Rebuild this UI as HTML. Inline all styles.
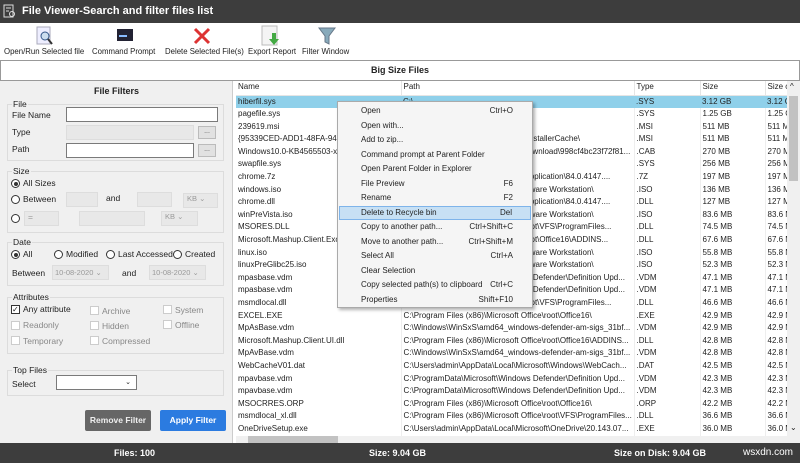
<!DOCTYPE html>
<html><head><meta charset="utf-8"><style>
*{box-sizing:border-box;margin:0;padding:0}
body{width:800px;height:463px;overflow:hidden;font-family:"Liberation Sans",sans-serif;font-size:8.5px;color:#222;background:#fff;position:relative}
.abs{position:absolute}
#title{left:0;top:0;width:800px;height:23px;background:#3d3d3d;color:#fff;font-weight:bold;font-size:11px;line-height:23px;padding-left:22px}
#tb{left:0;top:23px;width:800px;height:37px;background:#fff}
.tbi{position:absolute;top:24px;font-size:7.8px;color:#222;white-space:nowrap}
#hdr{left:0;top:60px;width:800px;height:21px;border:1px solid #999;background:#fff;text-align:center;font-weight:bold;font-size:9px;line-height:19px}
#left{left:0;top:81px;width:233px;height:362px;background:#f0f0f0;border-right:1px solid #ccc}
.grp{position:absolute;border:1px solid #dcdcdc;left:7px;width:217px}
.gl{position:absolute;top:-6px;left:4px;background:#f0f0f0;padding:0 1px;font-size:8.5px}
.t{position:absolute;font-size:8.5px;white-space:nowrap}
.inp{position:absolute;border:1px solid #7a7a7a;background:#fff;height:15px}
.dis{position:absolute;border:1px solid #ddd;background:#e8e8e8;height:15px}
.btn{position:absolute;border:1px solid #bbb;background:#e1e1e1;width:18px;height:13px;font-size:7px;text-align:center;line-height:10px;color:#555}
.rad{position:absolute;width:9px;height:9px;border:1px solid #333;border-radius:50%;background:#fff}
.rad.on::after{content:"";position:absolute;left:1.5px;top:1.5px;width:4px;height:4px;border-radius:50%;background:#333}
.cb{position:absolute;width:9px;height:9px;border:1px solid #ccc;background:#fff}
.gray{color:#888}
#list{left:236px;top:81px;width:551px;height:355px;background:#fff;overflow:hidden}
table{border-collapse:collapse;table-layout:fixed;width:551px}
td{height:12.6px;padding:0 2px;white-space:nowrap;overflow:hidden;font-size:8px;line-height:12.6px}
tr.h td{height:14px;border-right:1px solid #e5e5e5;border-bottom:1px solid #e5e5e5}
tr.sel td{background:#8fd0ea}
td.c{border-right:1px solid #eee}
#menu{left:337px;top:101px;width:196px;height:207px;background:#f5f5f5;border:1px solid #aaa;box-shadow:2px 2px 3px rgba(0,0,0,.3)}
.mi{position:absolute;left:1px;width:192px;height:14px;line-height:14px;font-size:8px;padding-left:22px}
.mi span{position:absolute;right:18px}
.mi.hl{background:#c7e0f4;border:1px solid #7eb4ea;padding-left:21px;line-height:12px}
#vs{left:787px;top:81px;width:13px;height:355px;background:#f0f0f0}
#hs{left:236px;top:436px;width:564px;height:7px;background:#f0f0f0}
#status{left:0;top:443px;width:800px;height:20px;background:#3d3d3d;color:#fff;font-weight:bold;font-size:9px;line-height:20px}
</style></head><body>
<div id="title" class="abs">File Viewer-Search and filter files list</div>
<svg class="abs" style="left:3px;top:4px" width="14" height="15"><rect x="1" y="1" width="9" height="12" fill="none" stroke="#ddd"/><line x1="3" y1="4" x2="8" y2="4" stroke="#ddd"/><line x1="3" y1="7" x2="6" y2="7" stroke="#ddd"/><circle cx="9" cy="10" r="2.5" fill="none" stroke="#ddd"/></svg>
<div id="tb" class="abs">
<svg class="abs" style="left:36px;top:3px" width="18" height="20"><rect x="1" y="1" width="13" height="17" fill="#eef" stroke="#aab"/><circle cx="9" cy="10" r="4" fill="#cde" stroke="#358"/><line x1="12" y1="13" x2="16" y2="18" stroke="#333" stroke-width="2"/></svg>
<svg class="abs" style="left:117px;top:6px" width="16" height="12"><rect width="16" height="12" fill="#223"/><rect x="2" y="6" width="8" height="2" fill="#8bf"/></svg>
<svg class="abs" style="left:192px;top:3px" width="20" height="20"><path d="M3 3 L17 17 M17 3 L3 17" stroke="#d33" stroke-width="3"/></svg>
<svg class="abs" style="left:261px;top:2px" width="20" height="22"><rect x="1" y="1" width="15" height="19" fill="#f4f4f4" stroke="#bbb"/><path d="M11 8 v6 h-3 l5 6 l5 -6 h-3 v-6z" fill="#4a4"/></svg>
<svg class="abs" style="left:318px;top:3px" width="18" height="20"><path d="M1 2 h16 l-6 8 v8 l-4 -2 v-6z" fill="#8ab" stroke="#678"/></svg>
<div class="tbi" style="left:4px">Open/Run Selected file</div>
<div class="tbi" style="left:92px">Command Prompt</div>
<div class="tbi" style="left:165px">Delete Selected File(s)</div>
<div class="tbi" style="left:248px">Export Report</div>
<div class="tbi" style="left:302px">Filter Window</div>
</div>
<div id="hdr" class="abs">Big Size Files</div>
<div id="left" class="abs">
<div class="t" style="left:0;width:233px;text-align:center;top:5px;font-weight:bold;font-size:9px">File Filters</div>
<div class="grp" style="top:23px;height:57px"><div class="gl">File</div></div>
<div class="t" style="left:12px;top:29px">File Name</div><div class="inp" style="left:66px;top:26px;width:152px"></div>
<div class="t" style="left:12px;top:46px">Type</div><div class="dis" style="left:66px;top:44px;width:128px"></div><div class="btn" style="left:198px;top:45px">...</div>
<div class="t" style="left:12px;top:63px">Path</div><div class="inp" style="left:66px;top:62px;width:128px"></div><div class="btn" style="left:198px;top:63px">...</div>
<div class="grp" style="top:90px;height:62px"><div class="gl">Size</div></div>
<div class="rad on" style="left:11px;top:98px"></div><div class="t" style="left:23px;top:97px">All Sizes</div>
<div class="rad" style="left:11px;top:114px"></div><div class="t" style="left:23px;top:113px">Between</div>
<div class="dis" style="left:66px;top:111px;width:32px"></div><div class="t" style="left:106px;top:112px">and</div><div class="dis" style="left:137px;top:111px;width:35px"></div><div class="dis" style="left:183px;top:112px;width:35px;color:#999;padding-left:3px;font-size:7.5px">KB ⌄</div>
<div class="rad" style="left:11px;top:133px"></div><div class="dis" style="left:24px;top:130px;width:35px;color:#999;padding-left:3px">=</div><div class="dis" style="left:79px;top:130px;width:66px"></div><div class="dis" style="left:161px;top:130px;width:37px;color:#999;padding-left:3px;font-size:7.5px">KB ⌄</div>
<div class="grp" style="top:161px;height:44px"><div class="gl">Date</div></div>
<div class="rad on" style="left:11px;top:169px"></div><div class="t" style="left:23px;top:168px">All</div>
<div class="rad" style="left:54px;top:169px"></div><div class="t" style="left:66px;top:168px">Modified</div>
<div class="rad" style="left:106px;top:169px"></div><div class="t" style="left:118px;top:168px">Last Accessed</div>
<div class="rad" style="left:173px;top:169px"></div><div class="t" style="left:185px;top:168px">Created</div>
<div class="t" style="left:12px;top:187px">Between</div><div class="dis" style="left:52px;top:184px;width:57px;color:#999;padding-left:2px;font-size:7.5px;line-height:13px">10-08-2020 ⌄</div>
<div class="t" style="left:122px;top:187px">and</div><div class="dis" style="left:149px;top:184px;width:57px;color:#999;padding-left:2px;font-size:7.5px;line-height:13px">10-08-2020 ⌄</div>
<div class="grp" style="top:216px;height:57px"><div class="gl">Attributes</div></div>
<div class="cb" style="left:11px;top:224px;border-color:#333;font-size:8px;line-height:7px">✓</div><div class="t" style="left:23px;top:223px">Any attribute</div>
<div class="cb" style="left:90px;top:225px"></div><div class="t gray" style="left:102px;top:225px">Archive</div>
<div class="cb" style="left:163px;top:224px"></div><div class="t gray" style="left:175px;top:224px">System</div>
<div class="cb" style="left:11px;top:240px"></div><div class="t gray" style="left:23px;top:239px">Readonly</div>
<div class="cb" style="left:90px;top:240px"></div><div class="t gray" style="left:102px;top:240px">Hidden</div>
<div class="cb" style="left:163px;top:239px"></div><div class="t gray" style="left:175px;top:239px">Offline</div>
<div class="cb" style="left:11px;top:255px"></div><div class="t gray" style="left:23px;top:255px">Temporary</div>
<div class="cb" style="left:90px;top:255px"></div><div class="t gray" style="left:102px;top:255px">Compressed</div>
<div class="grp" style="top:289px;height:26px"><div class="gl">Top Files</div></div>
<div class="t" style="left:12px;top:298px">Select</div><div class="inp" style="left:56px;top:294px;width:81px;text-align:right;padding-right:5px;font-size:7px;line-height:13px">⌄</div>
<div class="abs" style="left:85px;top:329px;width:66px;height:21px;background:#666;color:#eee;font-weight:bold;text-align:center;line-height:21px;border-radius:2px">Remove Filter</div>
<div class="abs" style="left:160px;top:329px;width:66px;height:21px;background:#2b7be0;color:#fff;font-weight:bold;text-align:center;line-height:21px;border-radius:2px">Apply Filter</div>
</div>
<div id="list" class="abs"><table>
<colgroup><col style="width:165px"><col style="width:233px"><col style="width:66px"><col style="width:65px"><col style="width:22px"></colgroup>
<tr class="h"><td>Name</td><td>Path</td><td>Type</td><td>Size</td><td>Size c</td></tr>
<tr class="sel"><td>hiberfil.sys</td><td>C:\</td><td>.SYS</td><td>3.12 GB</td><td>3.12 GB</td></tr>
<tr><td class="c">pagefile.sys</td><td class="c">C:\</td><td class="c">.SYS</td><td class="c">1.25 GB</td><td>1.25 GB</td></tr>
<tr><td class="c">239619.msi</td><td class="c"></td><td class="c">.MSI</td><td class="c">511 MB</td><td>511 MB</td></tr>
<tr><td class="c">{95339CED-ADD1-48FA-94DF...</td><td class="c">C:\ProgramData\VMware\VMware\InstallerCache\</td><td class="c">.MSI</td><td class="c">511 MB</td><td>511 MB</td></tr>
<tr><td class="c">Windows10.0-KB4565503-x6...</td><td class="c">C:\Windows\SoftwareDistribution\Download\998cf4bc23f72f81...</td><td class="c">.CAB</td><td class="c">270 MB</td><td>270 MB</td></tr>
<tr><td class="c">swapfile.sys</td><td class="c">C:\</td><td class="c">.SYS</td><td class="c">256 MB</td><td>256 MB</td></tr>
<tr><td class="c">chrome.7z</td><td class="c">C:\Program Files\Google\Chrome\Application\84.0.4147....</td><td class="c">.7Z</td><td class="c">197 MB</td><td>197 MB</td></tr>
<tr><td class="c">windows.iso</td><td class="c">C:\Program Files (x86)\VMware\VMware Workstation\</td><td class="c">.ISO</td><td class="c">136 MB</td><td>136 MB</td></tr>
<tr><td class="c">chrome.dll</td><td class="c">C:\Program Files\Google\Chrome\Application\84.0.4147....</td><td class="c">.DLL</td><td class="c">127 MB</td><td>127 MB</td></tr>
<tr><td class="c">winPreVista.iso</td><td class="c">C:\Program Files (x86)\VMware\VMware Workstation\</td><td class="c">.ISO</td><td class="c">83.6 MB</td><td>83.6 MB</td></tr>
<tr><td class="c">MSORES.DLL</td><td class="c">C:\Program Files\Microsoft Office\root\VFS\ProgramFiles...</td><td class="c">.DLL</td><td class="c">74.5 MB</td><td>74.5 MB</td></tr>
<tr><td class="c">Microsoft.Mashup.Client.Exc...</td><td class="c">C:\Program Files\Microsoft Office\root\Office16\ADDINS...</td><td class="c">.DLL</td><td class="c">67.6 MB</td><td>67.6 MB</td></tr>
<tr><td class="c">linux.iso</td><td class="c">C:\Program Files (x86)\VMware\VMware Workstation\</td><td class="c">.ISO</td><td class="c">55.8 MB</td><td>55.8 MB</td></tr>
<tr><td class="c">linuxPreGlibc25.iso</td><td class="c">C:\Program Files (x86)\VMware\VMware Workstation\</td><td class="c">.ISO</td><td class="c">52.3 MB</td><td>52.3 MB</td></tr>
<tr><td class="c">mpasbase.vdm</td><td class="c">C:\ProgramData\Microsoft\Windows Defender\Definition Upd...</td><td class="c">.VDM</td><td class="c">47.1 MB</td><td>47.1 MB</td></tr>
<tr><td class="c">mpasbase.vdm</td><td class="c">C:\ProgramData\Microsoft\Windows Defender\Definition Upd...</td><td class="c">.VDM</td><td class="c">47.1 MB</td><td>47.1 MB</td></tr>
<tr><td class="c">msmdlocal.dll</td><td class="c">C:\Program Files\Microsoft Office\root\VFS\ProgramFiles...</td><td class="c">.DLL</td><td class="c">46.6 MB</td><td>46.6 MB</td></tr>
<tr><td class="c">EXCEL.EXE</td><td class="c">C:\Program Files (x86)\Microsoft Office\root\Office16\</td><td class="c">.EXE</td><td class="c">42.9 MB</td><td>42.9 MB</td></tr>
<tr><td class="c">MpAsBase.vdm</td><td class="c">C:\Windows\WinSxS\amd64_windows-defender-am-sigs_31bf...</td><td class="c">.VDM</td><td class="c">42.9 MB</td><td>42.9 MB</td></tr>
<tr><td class="c">Microsoft.Mashup.Client.UI.dll</td><td class="c">C:\Program Files (x86)\Microsoft Office\root\Office16\ADDINS...</td><td class="c">.DLL</td><td class="c">42.8 MB</td><td>42.8 MB</td></tr>
<tr><td class="c">MpAvBase.vdm</td><td class="c">C:\Windows\WinSxS\amd64_windows-defender-am-sigs_31bf...</td><td class="c">.VDM</td><td class="c">42.8 MB</td><td>42.8 MB</td></tr>
<tr><td class="c">WebCacheV01.dat</td><td class="c">C:\Users\admin\AppData\Local\Microsoft\Windows\WebCach...</td><td class="c">.DAT</td><td class="c">42.5 MB</td><td>42.5 MB</td></tr>
<tr><td class="c">mpavbase.vdm</td><td class="c">C:\ProgramData\Microsoft\Windows Defender\Definition Upd...</td><td class="c">.VDM</td><td class="c">42.3 MB</td><td>42.3 MB</td></tr>
<tr><td class="c">mpavbase.vdm</td><td class="c">C:\ProgramData\Microsoft\Windows Defender\Definition Upd...</td><td class="c">.VDM</td><td class="c">42.3 MB</td><td>42.3 MB</td></tr>
<tr><td class="c">MSOCRRES.ORP</td><td class="c">C:\Program Files (x86)\Microsoft Office\root\Office16\</td><td class="c">.ORP</td><td class="c">42.2 MB</td><td>42.2 MB</td></tr>
<tr><td class="c">msmdlocal_xl.dll</td><td class="c">C:\Program Files (x86)\Microsoft Office\root\VFS\ProgramFiles...</td><td class="c">.DLL</td><td class="c">36.6 MB</td><td>36.6 MB</td></tr>
<tr><td class="c">OneDriveSetup.exe</td><td class="c">C:\Users\admin\AppData\Local\Microsoft\OneDrive\20.143.07...</td><td class="c">.EXE</td><td class="c">36.0 MB</td><td>36.0 MB</td></tr>
</table></div>
<div id="vs" class="abs"><div class="abs" style="left:2px;top:15px;width:9px;height:85px;background:#c2c2c2"></div><div class="abs" style="left:3px;top:1px;font-size:8px">^</div><div class="abs" style="left:3px;top:342px;font-size:8px">⌄</div></div>
<div id="hs" class="abs"><div class="abs" style="left:12px;top:0;width:90px;height:7px;background:#c2c2c2"></div></div>
<div id="menu" class="abs">
<div class="mi" style="top:2px">Open<span>Ctrl+O</span></div>
<div class="mi" style="top:16.5px">Open with...</div>
<div class="mi" style="top:31px">Add to zip...</div>
<div class="mi" style="top:45.5px">Command prompt at Parent Folder</div>
<div class="mi" style="top:60px">Open Parent Folder in Explorer</div>
<div class="mi" style="top:74.5px">File Preview<span>F6</span></div>
<div class="mi" style="top:89px">Rename<span>F2</span></div>
<div class="mi hl" style="top:103.5px">Delete to Recycle bin<span>Del</span></div>
<div class="mi" style="top:118px">Copy to another path...<span>Ctrl+Shift+C</span></div>
<div class="mi" style="top:132.5px">Move to another path...<span>Ctrl+Shift+M</span></div>
<div class="mi" style="top:147px">Select All<span>Ctrl+A</span></div>
<div class="mi" style="top:161.5px">Clear Selection</div>
<div class="mi" style="top:176px">Copy selected path(s) to clipboard<span>Ctrl+C</span></div>
<div class="mi" style="top:190.5px">Properties<span>Shift+F10</span></div>
</div>
<div id="status" class="abs"><span class="abs" style="left:114px">Files: 100</span><span class="abs" style="left:369px">Size: 9.04 GB</span><span class="abs" style="left:614px">Size on Disk: 9.04 GB</span><span class="abs" style="left:743px;font-weight:normal;font-size:10px">wsxdn.com</span></div>
</body></html>
